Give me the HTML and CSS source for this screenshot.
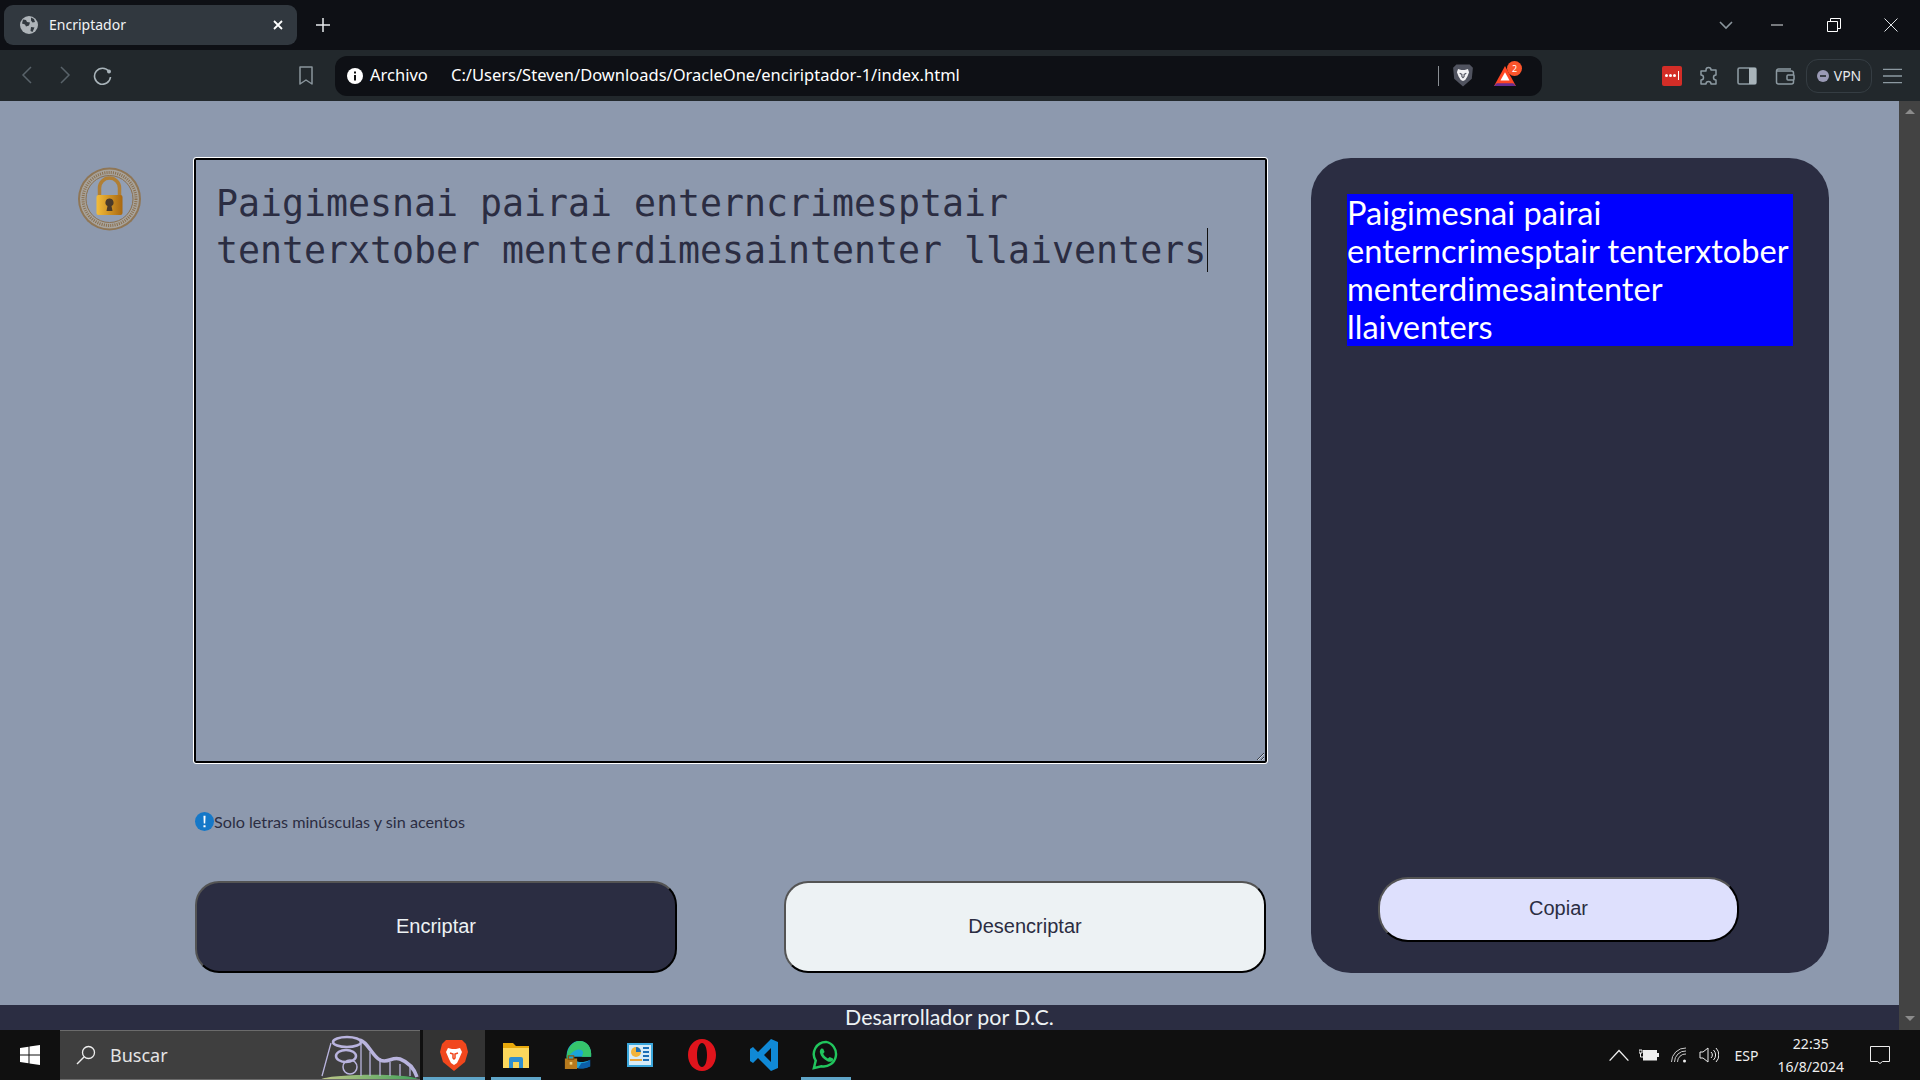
FILE: index.html
```html
<!DOCTYPE html>
<html lang="es">

<head>
     <meta charset="UTF-8">
     <title>Encriptador</title>
     <link rel="stylesheet" href="styles.css">
</head>

<body>
     <!-- barra de pestañas -->
     <div class="tabstrip">
          <div class="tab">
               <svg class="favicon" viewBox="0 0 18 18"><circle cx="9" cy="9" r="9" fill="#aeb4b9"/><path d="M3 3.500l3 .5 1 2 3 .5-1 3-3 1-1-2-3-1zM11 1.500l3 1.500 1 3-2.500 .5-1.500-2zM11 11l3.500 .5-2 4.500-2-1z" fill="#31383f"/></svg>
               <span class="tabtitle">Encriptador</span>
               <svg class="tabclose" viewBox="0 0 10 10"><path d="M1 1l8 8M9 1l-8 8" stroke="#fff" stroke-width="1.800"/></svg>
          </div>
          <svg class="newtab" viewBox="0 0 14 14"><path d="M7 0v14M0 7h14" stroke="#e8eaed" stroke-width="1.500"/></svg>
          <div class="wincontrols">
               <svg class="winbtn winbtn-lista" viewBox="0 0 14 8"><path d="M1 1l6 6 6-6" stroke="#8a959c" stroke-width="1.600" fill="none"/></svg>
               <svg class="winbtn" viewBox="0 0 14 14"><path d="M1 7h12" stroke="#dfe3e6" stroke-width="1"/></svg>
               <svg class="winbtn" viewBox="0 0 14 14"><path d="M.5 3.500h10v10H.5zM3.500 3V.5h10v10H11" stroke="#fff" stroke-width="1" fill="none"/></svg>
               <svg class="winbtn" viewBox="0 0 14 14"><path d="M.5 .5l13 13M13.500 .5l-13 13" stroke="#dfe3e6" stroke-width="1"/></svg>
          </div>
     </div>

     <!-- barra de navegacion -->
     <div class="toolbar">
          <div class="navbtns">
               <svg class="navicon" viewBox="0 0 20 20"><path d="M14 2l-8 8 8 8" stroke="#59636a" stroke-width="1.500" fill="none"/></svg>
               <svg class="navicon" viewBox="0 0 20 20"><path d="M6 2l8 8-8 8" stroke="#59636a" stroke-width="1.500" fill="none"/></svg>
               <svg class="navicon" viewBox="0 0 20 20"><path d="M16 6.500A8 8 0 1 0 17.500 12" stroke="#a9b4ba" stroke-width="1.600" fill="none"/><circle cx="16" cy="6.500" r="2" fill="#a9b4ba"/></svg>
          </div>
          <svg class="bookmark" viewBox="0 0 16 20"><path d="M2 1h12v17l-6-4-6 4z" stroke="#8a959c" stroke-width="1.500" fill="none" stroke-linejoin="round"/></svg>
          <div class="omnibox">
               <svg class="infoicon" viewBox="0 0 16 16"><circle cx="8" cy="8" r="8" fill="#fff"/><path d="M7 7h2v5.500H7zM7 3.500h2v2H7z" fill="#111"/></svg>
               <span class="archivo">Archivo</span>
               <span class="url">C:/Users/Steven/Downloads/OracleOne/enciriptador-1/index.html</span>
               <span class="omnisep"></span>
               <svg class="shield" viewBox="0 0 20 22"><path d="M4 1h12l3 3-1 10-8 7-8-7L1 4z" fill="#50535f"/><path d="M5.500 5l3 1h3l3-1 1 3-1.500 4-2 3-2 1-2-1-2-3L4.500 8z" fill="#f2f2f4"/><path d="M7 9l2 1v2l1 1 1-1v-2l2-1" stroke="#50535f" fill="none"/></svg>
               <span class="rewards">
                    <svg class="triangle" viewBox="0 0 24 22"><path d="M12 0l12 22H0z" fill="#ff4724"/><path d="M3 19h18l3 3H0z" fill="#662d91"/><path d="M12 7l5 9H7z" fill="#fff"/></svg>
                    <span class="badge">2</span>
               </span>
          </div>
          <div class="tools">
               <span class="lastpass"><i></i><i></i><i></i><b></b></span>
               <svg class="toolicon" viewBox="0 0 20 20"><path d="M7 4a2.500 2.500 0 0 1 5 0h5v5a2.500 2.500 0 0 0 0 5v4h-5a2.500 2.500 0 0 0-5 0H2v-4a2.500 2.500 0 0 0 0-5V5h5z" stroke="#8c99a1" stroke-width="1.500" fill="none" stroke-linejoin="round"/></svg>
               <svg class="toolicon" viewBox="0 0 20 20"><rect x="1" y="2" width="18" height="16" rx="1.500" fill="none" stroke="#8c99a1" stroke-width="1.600"/><rect x="12" y="2" width="7" height="16" fill="#a9b4ba"/></svg>
               <svg class="toolicon" viewBox="0 0 20 20"><path d="M16 3H3.500a2 2 0 0 0-2 2v11a2 2 0 0 0 2 2h13a2 2 0 0 0 2-2V7a2 2 0 0 0-2-2H2" stroke="#8c99a1" stroke-width="1.500" fill="none"/><rect x="12" y="9" width="7" height="5" rx="1" fill="#22282c" stroke="#8c99a1" stroke-width="1.500"/></svg>
               <div class="vpn"><svg class="vpndot" viewBox="0 0 12 12"><circle cx="6" cy="6" r="6" fill="#9a9ab5"/><path d="M3 6h6" stroke="#22282c" stroke-width="1.600"/></svg>VPN</div>
               <svg class="menuicon" viewBox="0 0 20 16"><path d="M0 1h20M0 8h20M0 15h20" stroke="#8c99a1" stroke-width="1.400"/></svg>
          </div>
     </div>

     <div class="viewport">
          <div class="pagecol">
               <div class="wholebody">
                    <svg class="logo" viewBox="0 0 64 64">
                         <defs>
                              <linearGradient id="oro" x1="0" x2="1" y1="0" y2="0">
                                   <stop offset="0" stop-color="#f4bd3a"/>
                                   <stop offset="1" stop-color="#a9670f"/>
                              </linearGradient>
                         </defs>
                         <circle cx="32" cy="32" r="31.500" fill="#8f7656"/>
                         <circle cx="32" cy="32" r="29.500" fill="#a7a39c"/>
                         <circle cx="32" cy="32" r="26.500" fill="none" stroke="#8a7050" stroke-width="3" stroke-dasharray="1 1.200"/>
                         <circle cx="32" cy="32" r="23.500" fill="#929fb4" stroke="#8a7050" stroke-width="1"/>
                         <path d="M22 29V21a10 10 0 0 1 20 0v8" fill="none" stroke="#b07f35" stroke-width="3.500"/>
                         <rect x="19" y="28" width="26" height="20" rx="2" fill="url(#oro)"/>
                         <path d="M32 31.500a4 4 0 0 1 2 7.500l1 5h-6l1-5a4 4 0 0 1 2-7.500z" fill="#4a3a2a"/>
                    </svg>
                    <div class="columna">
                         <div class="entrada">Paigimesnai pairai enterncrimesptair tenterxtober menterdimesaintenter llaiventers<span class="caret"></span></div>
                         <div class="aviso">
                              <svg class="avisoicon" viewBox="0 0 18 18"><circle cx="9" cy="9" r="9" fill="#1578c8"/><path d="M8 3.500h2l-.3 7.500H8.300zM8 12.500h2v2H8z" fill="#fff"/></svg>
                              <span>Solo letras minúsculas y sin acentos</span>
                         </div>
                         <div class="botones">
                              <button class="btn btn-encriptar">Encriptar</button>
                              <button class="btn btn-desencriptar">Desencriptar</button>
                         </div>
                    </div>
                    <div class="panel">
                         <div class="resultado">Paigimesnai pairai enterncrimesptair tenterxtober menterdimesaintenter llaiventers</div>
                         <button class="btn btn-copiar">Copiar</button>
                    </div>
               </div>
               <div class="pie">Desarrollador por D.C.</div>
          </div>
          <div class="scrollbar">
               <span class="flecha-arriba"></span>
               <span class="flecha-abajo"></span>
          </div>
     </div>

     <!-- barra de tareas -->
     <div class="taskbar">
          <svg class="winlogo" viewBox="0 0 20 20"><path d="M0 3l8.500-1.200v7.700H0zM9.500 1.600L20 0v9.500H9.500zM0 10.500h8.500v7.700L0 17zM9.500 10.500H20V20L9.500 18.400z" fill="#fff"/></svg>
          <div class="buscar">
               <svg class="lupa" viewBox="0 0 20 20"><circle cx="12.500" cy="7.500" r="6" fill="none" stroke="#eee" stroke-width="1.300"/><path d="M8 12l-7 7" stroke="#eee" stroke-width="1.500"/></svg>
               <span>Buscar</span>
               <svg class="coaster" viewBox="0 0 100 50">
                    <defs>
                         <linearGradient id="pasto" x1="0" x2="1" y1="0" y2="0">
                              <stop offset="0" stop-color="#c2c98a"/>
                              <stop offset="1" stop-color="#3f9f59"/>
                         </linearGradient>
                    </defs>
                    <path d="M0 50c4-6 90-8 100 0z" fill="url(#pasto)"/>
                    <path d="M2 46L11 13M41 46V14M50 46V22M60 46V28M70 46V32M80 46V34M90 46V36" stroke="#b9b4de" stroke-width="1.300"/>
                    <ellipse cx="27" cy="12" rx="14" ry="5" fill="none" stroke="#b9b4de" stroke-width="2.500"/>
                    <path d="M40 10c8 2 12 16 20 20s12-4 20-1 14 9 17 18" fill="none" stroke="#b9b4de" stroke-width="3.500"/>
                    <ellipse cx="26" cy="26" rx="10" ry="6" fill="none" stroke="#b9b4de" stroke-width="2.500"/>
                    <circle cx="30" cy="37" r="7" fill="none" stroke="#b9b4de" stroke-width="1.500"/>
               </svg>
          </div>
          <div class="apps">
               <div class="app app-activa">
                    <svg class="appicon" viewBox="0 0 28 32"><path d="M6 1h16l4 4 2 8-3 10-11 9L3 23 0 13l2-8z" fill="#f1471d"/><path d="M8 9l4 1h4l4-1 2 4-3 7-2 4-3 2-3-2-2-4-3-7z" fill="#fff"/><path d="M10 14l3 1v4l1 1 1-1v-4l3-1" stroke="#f1471d" stroke-width="1.500" fill="none"/></svg>
               </div>
               <div class="app app-abierta">
                    <svg class="appicon" viewBox="0 0 28 32"><path d="M1 4h10l3 3h13v22H1z" fill="#e8a90b"/><rect x="1" y="9" width="26" height="20" fill="#fbd75c"/><path d="M7 29V20a2 2 0 0 1 2-2h10a2 2 0 0 1 2 2v9h-4v-6h-6v6z" fill="#2f8fd0"/></svg>
               </div>
               <div class="app">
                    <svg class="appicon" viewBox="0 0 32 32"><path d="M31 18H11c0 6 9 8 18 4v7c-11 5-26 1-26-12C3 7 10 0 17 0c9 0 15 7 14 18z" fill="#1ba5d8"/><path d="M31 18H20c4-5 1-9-5-8-6 2-10 7-12 12C2 9 10 0 18 0c9 0 14 8 13 18z" fill="#36c56c"/><path d="M20 25c5 0 8-2 10-4v8c-4 2-9 3-14 2z" fill="#0c5ea8"/><rect x="1" y="20" width="14" height="12" fill="#b77a1d"/><rect x="5" y="17" width="6" height="4" fill="none" stroke="#8a5a14" stroke-width="1.500"/><rect x="6.500" y="24" width="3" height="3" fill="#f3d27a"/></svg>
               </div>
               <div class="app">
                    <svg class="appicon" viewBox="0 0 28 32"><rect x="1" y="4" width="26" height="24" fill="#3ba7dc"/><rect x="3" y="6" width="22" height="20" fill="#d6ecf8"/><circle cx="10" cy="13" r="5" fill="#f2b43b"/><path d="M10 13V8a5 5 0 0 1 5 5z" fill="#1d6fb5"/><rect x="4" y="20" width="12" height="2" fill="#e8a33b"/><path d="M17 9h6M17 13h6M17 17h6M17 21h6" stroke="#1d6fb5" stroke-width="2"/></svg>
               </div>
               <div class="app">
                    <svg class="appicon" viewBox="0 0 28 32"><path fill-rule="evenodd" d="M14 0c8 0 14 7 14 16s-6 16-14 16S0 25 0 16 6 0 14 0zm0 4c-3 0-5 5-5 12s2 12 5 12 5-5 5-12-2-12-5-12z" fill="#e0141c"/></svg>
               </div>
               <div class="app">
                    <svg class="appicon" viewBox="0 0 28 32"><path d="M21 0l7 3v26l-7 3L8 19l-5 5-3-2v-12l3-2 5 5zM21 9l-7 7 7 7z" fill="#1089d6" fill-rule="evenodd"/></svg>
               </div>
               <div class="app app-abierta">
                    <svg class="appicon" viewBox="0 0 30 32"><path d="M15 2a13 13 0 0 0-11 20L2 30l8-2a13 13 0 1 0 5-26z" fill="none" stroke="#21c55d" stroke-width="2.600"/><path d="M10 9l2 .2 1.500 3.500-1.500 2c1 2 3 4 5 5l2-1.500 3.500 1.500v2c-1 2-4 2-6 1-4-2-7-5-8-9-.5-2 .5-4 1.500-4.700z" fill="#21c55d"/></svg>
               </div>
          </div>
          <div class="tray">
               <svg class="trayicon" viewBox="0 0 16 10"><path d="M.5 9.500L8 1.500l7.500 8" stroke="#eee" stroke-width="1.100" fill="none"/></svg>
               <svg class="trayicon" viewBox="0 0 20 12"><path d="M0 1h3v3H0zM1.500 4v4h3" stroke="#eee" fill="none"/><rect x="4.500" y="1.500" width="13" height="9.500" fill="#eee" stroke="#eee"/><rect x="18" y="4" width="2" height="4" fill="#eee"/></svg>
               <svg class="trayicon" viewBox="0 0 16 16"><path d="M.5 15A14 14 0 0 1 15 1M3.500 15A11 11 0 0 1 15 4M6.500 15A8 8 0 0 1 15 7" stroke="#ccc" fill="none"/><circle cx="13.500" cy="14" r="1.500" fill="#eee"/></svg>
               <svg class="trayicon" viewBox="0 0 20 16"><path d="M1 5h3l5-4v14l-5-4H1z" stroke="#eee" fill="none"/><path d="M12 5a4 4 0 0 1 0 6M14.500 3a7 7 0 0 1 0 10M17 1a10 10 0 0 1 0 14" stroke="#eee" fill="none"/></svg>
               <span class="idioma">ESP</span>
               <div class="reloj"><span>22:35</span><span>16/8/2024</span></div>
               <svg class="notif" viewBox="0 0 20 18"><path d="M.5 .5h19v15h-7L10 17.500 7.500 15.500h-7z" stroke="#eee" fill="none"/></svg>
          </div>
     </div>
</body>

</html>
```

FILE: styles.css
```css
* {
     box-sizing: border-box;
}

body {
     margin: 0;
     width: 1920px;
     height: 1080px;
     overflow: hidden;
     display: flex;
     flex-direction: column;
     font-family: "Noto Sans", sans-serif;
}

/* pestañas */
.tabstrip {
     height: 50px;
     background: #0e1015;
     display: flex;
     align-items: center;
     padding-left: 4px;
}

.tab {
     width: 293px;
     height: 40px;
     background: #31383f;
     border-radius: 9px;
     display: flex;
     align-items: center;
     padding: 0 16px;
     color: #f1f3f4;
     font-size: 14px;
}

.favicon {
     width: 18px;
     height: 18px;
     margin-right: 11px;
}

.tabtitle {
     flex: 1;
     padding-bottom: 2px;
}

.tabclose {
     width: 10px;
     height: 10px;
     margin-right: -2px;
}

.newtab {
     width: 14px;
     height: 14px;
     margin-left: 19px;
}

.wincontrols {
     margin-left: auto;
     display: flex;
     align-items: center;
     gap: 43px;
     padding-right: 22px;
}

.winbtn {
     width: 14px;
     height: 14px;
}

.winbtn-lista {
     margin-right: -6px;
}

/* barra de navegacion */
.toolbar {
     height: 51px;
     background: #22282c;
     display: flex;
     align-items: center;
}

.navbtns {
     display: flex;
     padding-left: 17px;
     padding-bottom: 2px;
     gap: 18px;
     width: 298px;
}

.navicon {
     width: 20px;
     height: 20px;
}

.bookmark {
     width: 16px;
     height: 20px;
     margin-right: 21px;
}

.omnibox {
     width: 1207px;
     height: 40px;
     background: #0e1015;
     border-radius: 12px;
     display: flex;
     align-items: center;
     padding-left: 12px;
     color: #fff;
     font-size: 16.500px;
}

.infoicon {
     width: 16px;
     height: 16px;
     margin-right: 7px;
}

.archivo {
     width: 81px;
     padding-bottom: 2px;
}

.url {
     width: 987px;
     padding-bottom: 2px;
     white-space: nowrap;
}

.omnisep {
     width: 1px;
     height: 20px;
     background: #8a8f94;
}

.shield {
     width: 22px;
     height: 25px;
     margin-left: 13px;
}

.rewards {
     width: 30px;
     height: 25px;
     margin-left: 19px;
     margin-bottom: 5px;
     position: relative;
     display: flex;
     align-items: flex-end;
}

.triangle {
     width: 24px;
     height: 20px;
}

.badge {
     position: absolute;
     top: 0;
     left: 14px;
     width: 15px;
     height: 15px;
     border-radius: 50%;
     background: #fb542b;
     font-size: 9px;
     line-height: 15px;
     text-align: center;
}

.tools {
     display: flex;
     align-items: center;
     margin-left: 120px;
}

.lastpass {
     width: 20px;
     height: 20px;
     background: #d32d27;
     border-radius: 2px;
     display: flex;
     align-items: center;
     justify-content: center;
     gap: 1px;
     margin-right: 17px;
}

.lastpass i {
     width: 3px;
     height: 3px;
     border-radius: 50%;
     background: #fff;
}

.lastpass b {
     width: 1px;
     height: 9px;
     margin-left: 1px;
     background: #fff;
}

.toolicon {
     width: 20px;
     height: 20px;
     margin-right: 18px;
}

.toolicon:nth-of-type(3) {
     margin-right: 11px;
}

.vpn {
     width: 66px;
     height: 34px;
     border: 1px solid #353d43;
     border-radius: 12px;
     display: flex;
     align-items: center;
     justify-content: center;
     gap: 5px;
     color: #e8eaed;
     font-size: 14px;
}

.vpndot {
     width: 12px;
     height: 12px;
}

.menuicon {
     width: 19px;
     height: 16px;
     margin-left: 11px;
}

/* pagina */
.viewport {
     height: 929px;
     display: flex;
}

.pagecol {
     flex: 1;
     display: flex;
     flex-direction: column;
}

.wholebody {
     height: 904px;
     background: #8d99ae;
     display: flex;
     padding: 57px 0 32px 77px;
}

.logo {
     width: 65px;
     height: 64px;
     margin-top: 9px;
     margin-right: 52px;
}

.columna {
     width: 1073px;
     display: flex;
     flex-direction: column;
     margin-right: 44px;
}

.entrada {
     height: 605px;
     padding: 21px 20px;
     border: 2px solid #000;
     outline: 1px solid #fff;
     border-radius: 2px;
     color: #2b2d42;
     font-family: "DejaVu Sans Mono", monospace;
     font-size: 36.550px;
     line-height: 46.500px;
     overflow: auto;
     resize: vertical;
}

.caret {
     display: inline-block;
     width: 1px;
     height: 44px;
     margin-left: 1px;
     vertical-align: -9px;
     background: #111;
}

.aviso {
     height: 20px;
     margin-top: 48px;
     display: flex;
     align-items: center;
     color: #2b2d42;
     font-family: "Lato", sans-serif;
     font-size: 16.200px;
}

.avisoicon {
     width: 19px;
     height: 19px;
     margin-left: 1px;
}

.botones {
     display: flex;
     justify-content: space-between;
     margin-top: auto;
     padding: 0 1px;
}

.btn {
     font-family: "Liberation Sans", sans-serif;
     font-size: 20px;
     border: 2px outset #000;
     padding-bottom: 3px;
     cursor: pointer;
}

.btn-encriptar,
.btn-desencriptar {
     width: 482px;
     height: 92px;
     border-radius: 24px;
}

.btn-encriptar {
     background: #2b2d42;
     color: #edf2f4;
}

.btn-desencriptar {
     background: #edf2f4;
     color: #2b2d42;
}

.panel {
     width: 518px;
     background: #2b2d42;
     border-radius: 40px;
     padding: 36px 36px 31px;
     display: flex;
     flex-direction: column;
}

.resultado {
     background: #00f;
     color: #fff;
     font-family: "Lato", sans-serif;
     font-size: 32.600px;
     line-height: 38px;
}

.btn-copiar {
     width: 361px;
     height: 65px;
     margin-top: auto;
     margin-left: 31px;
     border-radius: 30px;
     background: #dee0fd;
     color: #2b2d42;
}

.pie {
     height: 25px;
     background: #2b2d42;
     color: #edf2f4;
     font-family: "Lato", sans-serif;
     font-size: 21.400px;
     line-height: 25px;
     text-align: center;
}

.scrollbar {
     width: 21px;
     background: #434343;
     display: flex;
     flex-direction: column;
     justify-content: space-between;
     align-items: center;
     padding: 8px 0 9px;
}

.flecha-arriba,
.flecha-abajo {
     width: 0;
     height: 0;
     border-left: 5px solid transparent;
     border-right: 5px solid transparent;
}

.flecha-arriba {
     border-bottom: 5px solid #8b8b8b;
}

.flecha-abajo {
     border-top: 5px solid #8b8b8b;
}

/* barra de tareas */
.taskbar {
     height: 50px;
     background: #101010;
     display: flex;
     align-items: center;
     color: #eee;
}

.winlogo {
     width: 20px;
     height: 20px;
     margin: 0 20px;
}

.buscar {
     width: 360px;
     height: 50px;
     background: #3f3f3f;
     border-top: 1px solid #6b6b6b;
     border-bottom: 1px solid #6b6b6b;
     display: flex;
     align-items: center;
     padding-left: 16px;
     font-size: 18px;
     color: #e4e4e4;
     overflow: hidden;
}

.lupa {
     width: 20px;
     height: 20px;
     margin-right: 14px;
}

.coaster {
     width: 100px;
     height: 50px;
     margin-left: auto;
}

.apps {
     display: flex;
     margin-left: 3px;
}

.app {
     width: 62px;
     height: 50px;
     display: flex;
     align-items: center;
     justify-content: center;
}

.app-activa {
     background: #333;
     box-shadow: inset 0 -3px 0 #5fa5c8;
}

.app-abierta {
     background: linear-gradient(#5fa5c8, #5fa5c8) bottom center / 50px 3px no-repeat;
}

.appicon {
     width: 28px;
     height: 32px;
}

.tray {
     margin-left: auto;
     display: flex;
     align-items: center;
     font-size: 14px;
     padding-right: 30px;
}

.trayicon {
     width: 20px;
     height: 16px;
     margin-right: 10px;
}

.idioma {
     margin: 0 19px 0 6px;
}

.reloj {
     display: flex;
     flex-direction: column;
     align-items: center;
     line-height: 23px;
     margin-right: 26px;
}

.notif {
     width: 20px;
     height: 18px;
}
```
